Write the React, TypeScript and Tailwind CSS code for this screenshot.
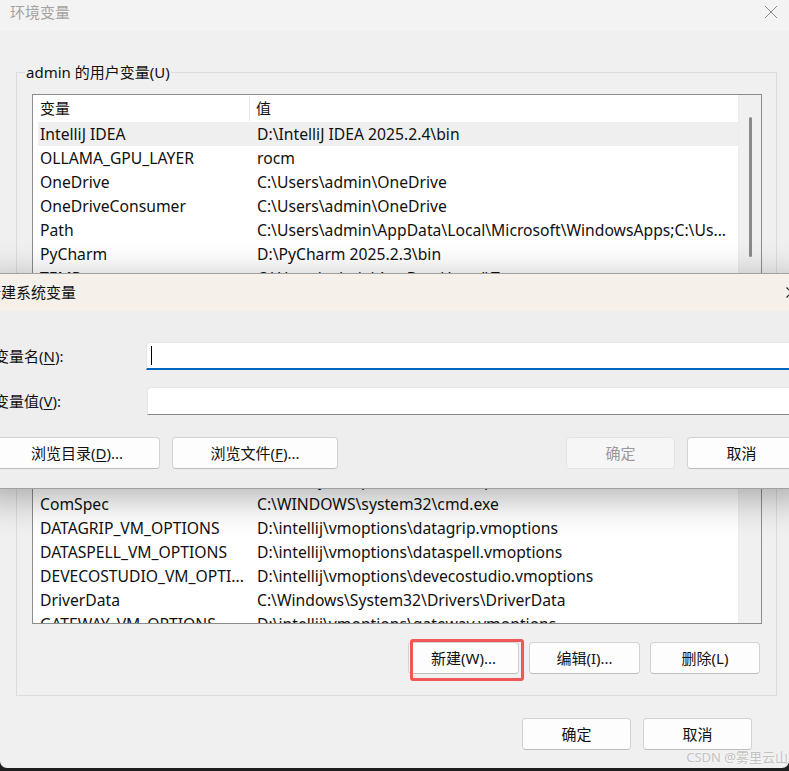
import React from "react";

const FONT = "font-['Segoe_UI','Noto_Sans','Noto_Sans_CJK_SC',sans-serif]";

type Row = { name: string; value: string };

const topRows: Row[] = [
  { name: "IntelliJ IDEA", value: "D:\\IntelliJ IDEA 2025.2.4\\bin" },
  { name: "OLLAMA_GPU_LAYER", value: "rocm" },
  { name: "OneDrive", value: "C:\\Users\\admin\\OneDrive" },
  { name: "OneDriveConsumer", value: "C:\\Users\\admin\\OneDrive" },
  { name: "Path", value: "C:\\Users\\admin\\AppData\\Local\\Microsoft\\WindowsApps;C:\\Us..." },
  { name: "PyCharm", value: "D:\\PyCharm 2025.2.3\\bin" },
  { name: "TEMP", value: "C:\\Users\\admin\\AppData\\Local\\Temp" },
  { name: "TMP", value: "C:\\Users\\admin\\AppData\\Local\\Temp" },
];

const bottomRows: Row[] = [
  { name: "CLION_VM_OPTIONS", value: "D:\\intellij\\vmoptions\\clion.vmoptions" },
  { name: "ComSpec", value: "C:\\WINDOWS\\system32\\cmd.exe" },
  { name: "DATAGRIP_VM_OPTIONS", value: "D:\\intellij\\vmoptions\\datagrip.vmoptions" },
  { name: "DATASPELL_VM_OPTIONS", value: "D:\\intellij\\vmoptions\\dataspell.vmoptions" },
  { name: "DEVECOSTUDIO_VM_OPTI...", value: "D:\\intellij\\vmoptions\\devecostudio.vmoptions" },
  { name: "DriverData", value: "C:\\Windows\\System32\\Drivers\\DriverData" },
  { name: "GATEWAY_VM_OPTIONS", value: "D:\\intellij\\vmoptions\\gateway.vmoptions" },
];

function ListRow({ row, selected }: { row: Row; selected?: boolean }) {
  return (
    <div
      className={
        "flex h-[24px] shrink-0 items-center whitespace-nowrap text-[15.7px] leading-[24px] text-[#111] " +
        (selected ? "bg-[#efefef]" : "")
      }
    >
      <div className="w-[212px] shrink-0 overflow-hidden pl-[2px]">{row.name}</div>
      <div className="overflow-hidden pl-[7px]">{row.value}</div>
    </div>
  );
}

function Btn({
  children,
  className = "",
  disabled = false,
}: {
  children: React.ReactNode;
  className?: string;
  disabled?: boolean;
}) {
  return (
    <div
      className={
        "flex h-[32px] shrink-0 items-center justify-center rounded-[4px] border text-[15px] " +
        (disabled
          ? "border-[#e3e3e3] bg-[#f6f6f6] text-[#9a9a9a] "
          : "border-[#d3d3d3] border-b-[#bdbdbd] bg-[#fdfdfd] text-[#111] ") +
        className
      }
    >
      {children}
    </div>
  );
}

export default function App() {
  return (
    <div className={"relative h-[771px] w-[789px] overflow-hidden bg-[#1e1e1e] " + FONT}>
      {/* main window */}
      <div className="flex h-[768px] flex-col rounded-b-[7px] bg-[#f0f0f0]">
        {/* title bar */}
        <div className="flex h-[31px] shrink-0 justify-between bg-[#f3f3f3] pl-[10px] pr-[11px]">
          <span className="text-[15px] leading-[24px] text-[#a3a3a3]">环境变量</span>
          <svg width="14" height="14" viewBox="0 0 14 14" className="mt-[5px]">
            <path d="M1 1 L13 13 M13 1 L1 13" stroke="#8a8a8a" strokeWidth="1" fill="none" />
          </svg>
        </div>

        <div className="pl-[16px] pr-[12px]">
          {/* group box */}
          <div className="relative mt-[41px] flex h-[624px] flex-col border border-[#dcdcdc] pl-[15px] pr-[14px] pt-[21px]">
            <span className="absolute -top-[11px] left-[8px] bg-[#f0f0f0] px-[1px] text-[15px] leading-[20px] text-[#111]">
              admin 的用户变量(U)
            </span>

            {/* list view */}
            <div className="flex h-[530px] shrink-0 overflow-hidden border border-[#8c8c8c] bg-white">
              <div className="flex min-w-0 flex-1 flex-col overflow-hidden pl-[5px]">
                {/* header */}
                <div className="flex h-[27px] shrink-0 items-center text-[15px] text-[#111]">
                  <div className="flex h-full w-[212px] shrink-0 items-center justify-between pl-[2px]">
                    <span>变量</span>
                    <span className="h-[25px] w-[1px] bg-[#e5e5e5]" />
                  </div>
                  <div className="pl-[6px]">值</div>
                </div>
                {topRows.map((r, i) => (
                  <ListRow key={r.name + i} row={r} selected={i === 0} />
                ))}
                <div className="h-[154px] shrink-0" />
                {bottomRows.map((r, i) => (
                  <ListRow key={r.name + i} row={r} />
                ))}
              </div>
              <div className="flex w-[23px] shrink-0 justify-center border-l border-[#ececec] bg-[#f0f0f0] pt-[22px]">
                <div className="h-[140px] w-[3px] rounded-full bg-[#8a8a8a]" />
              </div>
            </div>

            {/* buttons */}
            <div className="mt-[18px] flex justify-end gap-[10px] pr-[2px]">
              <div className="relative">
                <Btn className="w-[111px]">新建(W)...</Btn>
                <div className="absolute left-[2px] top-[-3px] h-[42px] w-[114px] rounded-[3px] border-[3px] border-[#f25757]" />
              </div>
              <Btn className="w-[111px]">编辑(I)...</Btn>
              <Btn className="w-[110px]">删除(L)</Btn>
            </div>
          </div>

          {/* bottom buttons */}
          <div className="mt-[22px] flex justify-end gap-[12px] pr-[25px]">
            <Btn className="w-[109px]">确定</Btn>
            <Btn className="w-[109px]">取消</Btn>
          </div>
        </div>
      </div>

      {/* new system variable dialog (on top) */}
      <div className="absolute left-[-26px] top-[273px] flex w-[842px] flex-col border border-[#a0a0a0] bg-[#eeeeee] shadow-[0_8px_36px_rgba(0,0,0,0.32)]">
        <div className="flex h-[37px] items-center justify-between bg-[#f5f0ea] pl-[11px] pr-[18px]">
          <span className="text-[15px] text-[#111]">新建系统变量</span>
          <svg width="11" height="11" viewBox="0 0 11 11">
            <path d="M0.5 0.5 L10.5 10.5 M10.5 0.5 L0.5 10.5" stroke="#222" strokeWidth="1.2" fill="none" />
          </svg>
        </div>
        <div className="flex flex-col px-[19px] pb-[19px] pt-[31px]">
          <div className="flex h-[28px] items-center">
            <span className="w-[152px] shrink-0 text-[15px] text-[#111]">
              变量名(<u className="underline-offset-2">N</u>):
            </span>
            <div className="flex h-[28px] flex-1 items-start rounded-t-[4px] border border-[#e6e6e6] border-b-2 border-b-[#0067c0] bg-white pl-[4px] pt-[3px]">
              <div className="h-[19px] w-[1px] bg-black" />
            </div>
          </div>
          <div className="mt-[17px] flex h-[28px] items-center">
            <span className="w-[153px] shrink-0 text-[15px] text-[#111]">
              变量值(<u className="underline-offset-2">V</u>):
            </span>
            <div className="h-[28px] flex-1 rounded-t-[4px] border border-[#e6e6e6] border-b-[#878787] bg-white" />
          </div>
          <div className="mt-[22px] flex items-center">
            <Btn className="w-[166px]">
              浏览目录(<u className="underline-offset-2">D</u>)...
            </Btn>
            <Btn className="ml-[12px] w-[166px]">
              浏览文件(<u className="underline-offset-2">F</u>)...
            </Btn>
            <div className="flex-1" />
            <Btn className="w-[109px]" disabled>
              确定
            </Btn>
            <Btn className="ml-[12px] w-[109px]">取消</Btn>
          </div>
        </div>
      </div>

      {/* watermark */}
      <div className="absolute bottom-[6px] right-[1px] text-[13px] leading-[16px] text-[#c2c2c2] [text-shadow:0_0_2px_#fff]">
        CSDN @雾里云山
      </div>
    </div>
  );
}
